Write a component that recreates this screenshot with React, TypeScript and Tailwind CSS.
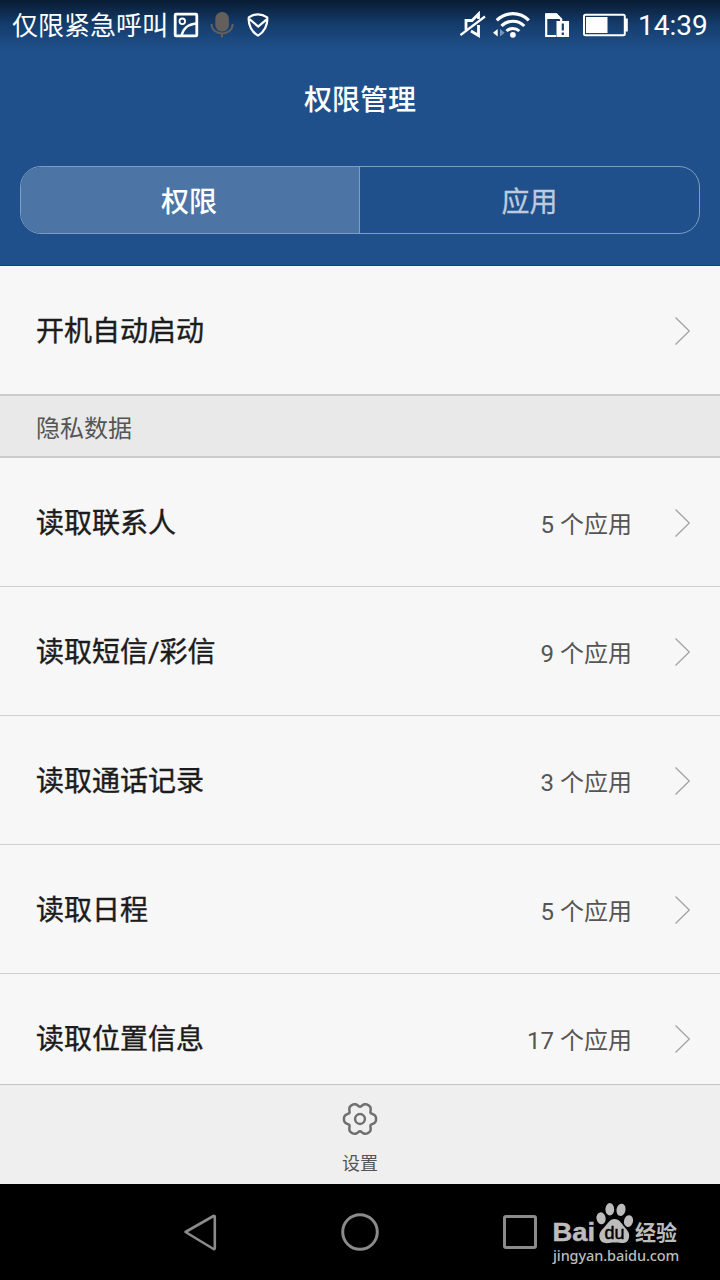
import React from "react";

const rows = [
  { label: "读取联系人", count: 5 },
  { label: "读取短信/彩信", count: 9 },
  { label: "读取通话记录", count: 3 },
  { label: "读取日程", count: 5 },
  { label: "读取位置信息", count: 17 },
];

function gearPath() {
  const pts: string[] = [];
  for (let i = 0; i < 120; i++) {
    const t = (i / 120) * Math.PI * 2;
    const r = 14.6 + 1.9 * Math.cos(6 * t) - 0.45 * Math.cos(12 * t);
    pts.push(`${(18 + r * Math.cos(t)).toFixed(2)} ${(18 + r * Math.sin(t)).toFixed(2)}`);
  }
  return `M${pts.join("L")}Z`;
}

function Chevron() {
  return (
    <svg className="ml-[42px] h-[30px] w-[18px]" viewBox="0 0 18 30" fill="none" stroke="#a3a3a3" strokeWidth="1.3">
      <path d="M1.5 1.5 15.3 15 1.5 28.5" />
    </svg>
  );
}

function StatusBar() {
  return (
    <div className="flex h-[50px] items-center bg-linear-to-b from-[#081c33] via-[#153d6d] via-50% to-[#1f508b] pl-3 pr-3 text-white">
      <span className="w-[156px] whitespace-nowrap pt-[2px] text-[26px] leading-[50px]">仅限紧急呼叫</span>
      <svg className="ml-[5px] h-[26px] w-[98px]" viewBox="173 12 98 26" fill="none" stroke="white">
        <rect x="175.2" y="14.2" width="21.6" height="21.6" rx="0.8" strokeWidth="2.8" />
        <circle cx="182.3" cy="21.3" r="2.8" strokeWidth="1.8" />
        <path d="M181.5 35.5C183.5 28 187.5 24.500 196.500 23.500" strokeWidth="2.4" />
        <rect x="215.300" y="12" width="13.600" height="19.500" rx="6.500" fill="#625f5d" stroke="none" />
        <path d="M211.500 24c0 12.500 21.200 12.500 21.200 0M222 33v4.500" stroke="#625f5d" strokeWidth="2" />
        <path d="M258 14.300c-3 0-6.300 1.100-9.200 3-.8 7.500 3 14.700 9.200 18.300 6.200-3.600 10-10.800 9.200-18.300-2.900-1.900-6.200-3-9.200-3Z" strokeWidth="2.200" strokeLinejoin="round" />
        <path d="M249.500 19.200 258.200 26.500 267 19.200" strokeWidth="2.200" />
      </svg>
      <svg className="ml-auto h-[28px] w-[170px]" viewBox="460 11 170 28" fill="none" stroke="white">
        <path d="M460.500 35 485 16.500" strokeWidth="2.200" />
        <path d="M466 30V20.500h6L478.500 14v5M478.500 25v10.500L471 31" strokeWidth="2.800" />
        <path d="M496.800 20.300a22.500 22.500 0 0 1 32 0" strokeWidth="3.200" />
        <path d="M501.500 26a16 16 0 0 1 22.800 0" strokeWidth="3.200" />
        <path d="M506.500 31a9.200 9.200 0 0 1 12.800 0" strokeWidth="3" />
        <circle cx="512.900" cy="34.800" r="2.900" fill="white" stroke="none" />
        <path d="M497.700 29v7.500l-4.700-3.750Z" fill="white" stroke="none" />
        <path d="M500 29v7.500l4.700-3.750Z" fill="#7895b9" stroke="none" />
        <path d="M556 36H546.200V14.300h10l5 5V21" strokeWidth="2.200" />
        <path d="M545.500 13.500H557l4.500 5.500h-16Z" fill="white" stroke="none" />
        <path d="M556.500 21H569v16h-12.500V21Z" fill="white" stroke="none" />
        <path d="M562.800 23.500v7M562.800 32.500v2.500" stroke="#17406f" strokeWidth="2.200" />
        <rect x="584" y="14.700" width="40.800" height="20.600" rx="1.500" strokeWidth="2" />
        <rect x="586" y="17" width="21.500" height="16" fill="white" stroke="none" />
        <path d="M625 18.500h2.800v13H625Z" fill="white" stroke="none" />
      </svg>
      <span className="ml-[8px] w-[70px] whitespace-nowrap pt-[2px] font-[Roboto,sans-serif] text-[28px] leading-[50px]">14:39</span>
    </div>
  );
}

function Watermark() {
  return (
    <div className="flex w-[130px] flex-col text-[#bcbcbc]">
      <svg className="h-[47px] w-[128px]" viewBox="552 1199 128 47" fill="#bcbcbc">
        <text x="552.500" y="1240.500" fontSize="26" fontWeight="bold" fontFamily="Liberation Sans, sans-serif" textLength="42.500" lengthAdjust="spacingAndGlyphs" stroke="#bcbcbc" strokeWidth="0.500">Bai</text>
        <ellipse cx="601" cy="1218.300" rx="4.600" ry="6" transform="rotate(-10 601 1218)" />
        <ellipse cx="609.800" cy="1209.300" rx="4.400" ry="6.200" />
        <ellipse cx="621" cy="1209.800" rx="4.500" ry="6.200" transform="rotate(12 621 1210)" />
        <ellipse cx="628.500" cy="1221" rx="4.500" ry="6" transform="rotate(12 628 1221)" />
        <path d="M614.500 1219c5 0 7 4.500 10 8 3 3.500 5.500 6 4.500 10.500-1 5-4.500 6-8 5.500-4-.6-8-.6-12 0-4.500.6-8.500-.5-9.500-5.500-.9-4.500 2-7.500 5-10.500s5-8 10-8Z" />
        <text x="614.500" y="1239" textAnchor="middle" fontSize="18" fill="black" stroke="black" strokeWidth="0.500" fontFamily="Liberation Sans, sans-serif" textLength="20" lengthAdjust="spacingAndGlyphs">du</text>
        <text x="635" y="1239.500" fontSize="21" fontWeight="bold" fontFamily="Noto Sans CJK SC, sans-serif">经验</text>
      </svg>
      <span className="whitespace-nowrap pl-px font-['Noto_Sans',sans-serif] text-[14.500px] font-medium leading-[18px] tracking-[-0.100px]">jingyan.baidu.com</span>
    </div>
  );
}

export default function App() {
  return (
    <div className="flex h-[1280px] w-[720px] flex-col overflow-hidden bg-[#f7f7f7] font-[Roboto,'Noto_Sans_CJK_SC',sans-serif]">
      <header className="h-[266px] shrink-0 border-b border-[#194279] bg-[#1f508b]">
        <StatusBar />
        <h1 className="h-[116px] text-center text-[28px] font-medium leading-[101px] text-white">权限管理</h1>
        <div className="mx-5 flex h-[68px] overflow-hidden rounded-[21px] border border-[#7d9dc3] text-[28px] leading-[71px]">
          <div className="w-[339px] border-r border-[#7d9dc3] bg-[#4c75a5] pr-[2px] text-center font-medium text-white">权限</div>
          <div className="flex-1 text-center text-[#bccbdd] [-webkit-text-stroke:0.3px_#bccbdd]">应用</div>
        </div>
      </header>
      <main className="flex-1 overflow-hidden">
        <div className="flex h-[130px] items-center border-b-2 border-[#cccccc] pl-9 pr-7 pt-[2px]">
          <span className="flex-1 pt-[2px] text-[28px] text-[#1c1c1c] [-webkit-text-stroke:0.4px_#1c1c1c]">开机自动启动</span>
          <Chevron />
        </div>
        <div className="h-[62px] border-b-2 border-[#cccccc] bg-[#e9e9e9] pl-9 text-[24px] leading-[66px] text-[#555555]">隐私数据</div>
        {rows.map((row) => (
          <div key={row.label} className="flex h-[129px] items-center border-b border-[#cfcfcf] pl-9 pr-7 pt-[2px] leading-[40px]">
            <span className="flex-1 pt-[2px] text-[28px] text-[#1c1c1c] [-webkit-text-stroke:0.4px_#1c1c1c]">{row.label}</span>
            <span className="pt-[3px] text-[24px] text-[#555555]">{row.count} 个应用</span>
            <Chevron />
          </div>
        ))}
      </main>
      <footer className="flex h-[100px] shrink-0 flex-col items-center border-t border-[#c5c5c5] bg-[#efefef] pt-[16px] text-[#555555]">
        <svg className="h-9 w-9" viewBox="0 0 36 36" fill="none" stroke="#6f6f6f" strokeWidth="2.500">
          <path d={gearPath()} strokeLinejoin="round" />
          <circle cx="18" cy="18" r="4.900" />
        </svg>
        <span className="mt-[13px] text-[18px] leading-[28px]">设置</span>
      </footer>
      <nav className="flex h-24 shrink-0 bg-black">
        <svg className="h-24 w-[552px]" viewBox="0 0 552 96" fill="none" stroke="#8b8b8b">
          <path d="M185.500 48 213.500 32q1.300-.6 1.300 1v31q0 1.600-1.300 1Z" strokeWidth="2.600" strokeLinejoin="round" />
          <circle cx="360" cy="48" r="17.300" strokeWidth="3" />
          <rect x="504.500" y="32.500" width="31" height="31" rx="1.500" strokeWidth="3" />
        </svg>
        <div className="pt-[15px]">
          <Watermark />
        </div>
      </nav>
    </div>
  );
}
